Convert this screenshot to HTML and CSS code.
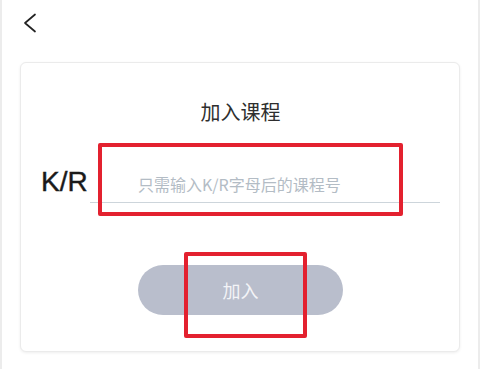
FILE: index.html
```html
<!DOCTYPE html>
<html lang="zh-CN">
<head>
<meta charset="utf-8">
<title>加入课程</title>
<link rel="stylesheet" href="styles.css">
</head>
<body>
<div class="page">
  <header class="topbar">
    <svg class="back" width="14" height="20" viewBox="0 0 14 20" aria-label="返回">
      <path d="M12 1.5 L2 10 L12 18.5" fill="none" stroke="#222" stroke-width="1.7" stroke-linecap="round" stroke-linejoin="round"/>
    </svg>
  </header>
  <section class="card">
    <h1 class="title">加入课程</h1>
    <div class="field">
      <span class="label">K/R</span>
      <input class="code" type="text" placeholder="只需输入K/R字母后的课程号">
    </div>
    <button class="join">加入</button>
  </section>
  <div class="mark mark-input"></div>
  <div class="mark mark-button"></div>
</div>
</body>
</html>
```
FILE: styles.css
```css
html, body {
  margin: 0;
  padding: 0;
  background: #ffffff;
}
.page {
  position: relative;
  width: 480px;
  height: 369px;
  box-sizing: border-box;
  border-left: 2px solid #ececec;
  border-right: 2px solid #ececec;
  overflow: hidden;
  font-family: "Noto Sans", "Noto Sans CJK SC", sans-serif;
}
.topbar {
  height: 48px;
  display: flex;
  align-items: flex-start;
  padding: 13px 0 0 21px;
  box-sizing: border-box;
}
.back {
  display: block;
}
.card {
  margin: 14px 18px 0 18px;
  height: 290px;
  box-sizing: border-box;
  border: 1px solid #ebebeb;
  border-radius: 6px;
  box-shadow: 0 1px 3px rgba(0, 0, 0, 0.07);
  background: #fff;
  padding: 35px 19px 0 20px;
  display: flex;
  flex-direction: column;
}
.title {
  margin: 0;
  text-align: center;
  font-family: "Noto Sans CJK SC", sans-serif;
  font-weight: 400;
  font-size: 20px;
  line-height: 28px;
  color: #2e2e2e;
}
.field {
  margin-top: 36px;
  display: flex;
  align-items: stretch;
  height: 41px;
}
.label {
  width: 49px;
  flex: none;
  font-family: "Liberation Sans", "Noto Sans", sans-serif;
  font-size: 28px;
  line-height: 40px;
  color: #1a1a1a;
  -webkit-text-stroke: 0.4px #1a1a1a;
}
.code {
  flex: 1;
  min-width: 0;
  height: 41px;
  box-sizing: border-box;
  border: none;
  border-bottom: 1px solid #cdd5db;
  outline: none;
  padding: 4px 0 0 48px;
  margin: 0;
  background: transparent;
  font-family: "Noto Sans CJK SC", sans-serif;
  font-size: 16px;
  color: #333;
}
.code::placeholder {
  color: #b3bcc5;
}
.join {
  align-self: center;
  margin-top: 62px;
  width: 205px;
  height: 50px;
  border: none;
  border-radius: 25px;
  background: #b9becc;
  color: #f3f4f7;
  font-family: "Noto Sans CJK SC", sans-serif;
  font-size: 18px;
  padding: 0;
}
.mark {
  position: absolute;
  border: 4px solid #e3212f;
  border-radius: 2px;
  box-sizing: border-box;
}
.mark-input {
  left: 96px;
  top: 143px;
  width: 305px;
  height: 73px;
}
.mark-button {
  left: 182px;
  top: 252px;
  width: 123px;
  height: 86px;
}
```
